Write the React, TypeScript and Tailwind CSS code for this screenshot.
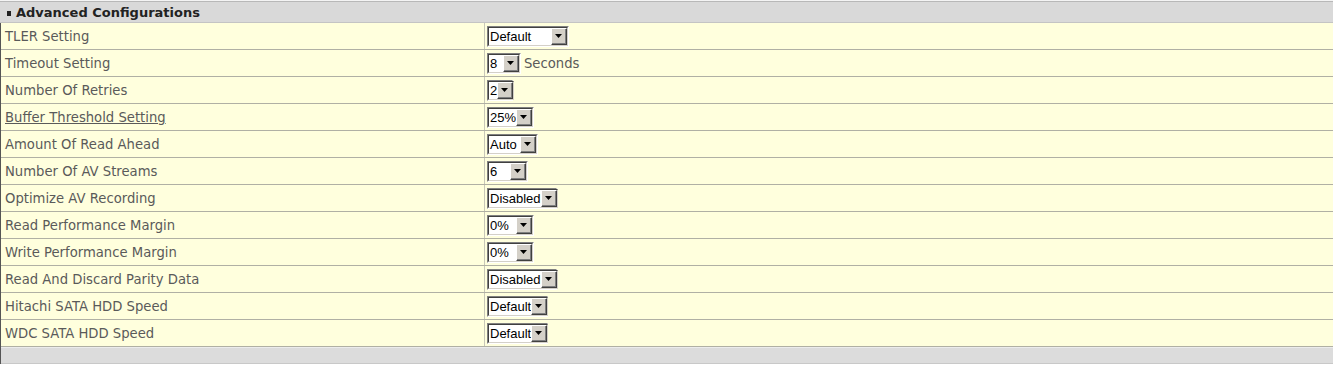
import React from "react";

type Row = { label: string; value: string; w: number; suffix?: string; link?: boolean };

const rows: Row[] = [
  { label: "TLER Setting", value: "Default", w: 82 },
  { label: "Timeout Setting", value: "8", w: 34, suffix: "Seconds" },
  { label: "Number Of Retries", value: "2", w: 26 },
  { label: "Buffer Threshold Setting", value: "25%", w: 47, link: true },
  { label: "Amount Of Read Ahead", value: "Auto", w: 51 },
  { label: "Number Of AV Streams", value: "6", w: 41 },
  { label: "Optimize AV Recording", value: "Disabled", w: 70 },
  { label: "Read Performance Margin", value: "0%", w: 47 },
  { label: "Write Performance Margin", value: "0%", w: 47 },
  { label: "Read And Discard Parity Data", value: "Disabled", w: 70 },
  { label: "Hitachi SATA HDD Speed", value: "Default", w: 61 },
  { label: "WDC SATA HDD Speed", value: "Default", w: 61 },
];

function Select({ value, w }: { value: string; w: number }) {
  return (
    <div
      className="flex h-[21px] border-t border-l border-t-[#808080] border-l-[#808080] border-b border-r border-b-[#ffffff] border-r-[#ffffff]"
      style={{ width: w }}
    >
      <div className="flex flex-1 border-t border-l border-t-[#404040] border-l-[#404040] border-b border-r border-b-[#d4d0c8] border-r-[#d4d0c8] bg-white">
        <div className="flex-1 pl-[1px] text-[13px] leading-[17px] text-black overflow-hidden whitespace-nowrap" style={{ fontFamily: '"Liberation Sans", Arial, sans-serif' }}>
          {value}
        </div>
        <div className="w-[16px] h-[17px] bg-[#d4d0c8] border-t border-l border-t-[#ffffff] border-l-[#ffffff] border-b border-r border-b-[#404040] border-r-[#404040] flex items-center justify-center">
          <div className="w-[14px] h-[15px] border-b border-r border-b-[#808080] border-r-[#808080] flex items-center justify-center">
            <svg width="7" height="4" viewBox="0 0 7 4">
              <path d="M0 0H7L3.5 4Z" fill="#000" />
            </svg>
          </div>
        </div>
      </div>
    </div>
  );
}

export default function App() {
  return (
    <div className="w-[1333px] h-[365px] bg-white" style={{ fontFamily: '"DejaVu Sans", Verdana, sans-serif' }}>
      <div className="h-px bg-[#f4f4f4]" />
      <div className="h-px bg-[#b8b8b8]" />
      <div className="h-[21px] bg-[#d9d9d9] border-b border-[#c4c4c4] flex items-center pl-[7px]">
        <div className="w-[4px] h-[5px] bg-[#222] mr-[5px] mt-[2px]" />
        <span className="text-[13px] font-bold text-[#222] leading-none">Advanced Configurations</span>
      </div>
      <div className="border-l border-[#555]">
        {rows.map((r, i) => (
          <div key={i} className="flex h-[27px] bg-[#ffffdd] border-b border-[#b0b0a4]">
            <div className="w-[484px] border-r border-[#c8c8b8] flex items-center pl-[4px] pt-[2px] text-[13.2px] text-[#5a5a5a]">
              <span className={r.link ? "underline" : ""}>{r.label}</span>
            </div>
            <div className="flex-1 flex items-center pl-[2px]">
              <Select value={r.value} w={r.w} />
              {r.suffix && <span className="ml-[3px] pt-[2px] text-[13.2px] text-[#5a5a5a]">{r.suffix}</span>}
            </div>
          </div>
        ))}
        <div className="h-px bg-[#ececec]" />
        <div className="h-[16px] bg-[#dcdcdc] border-b border-[#c8c8c8]" />
      </div>
    </div>
  );
}
